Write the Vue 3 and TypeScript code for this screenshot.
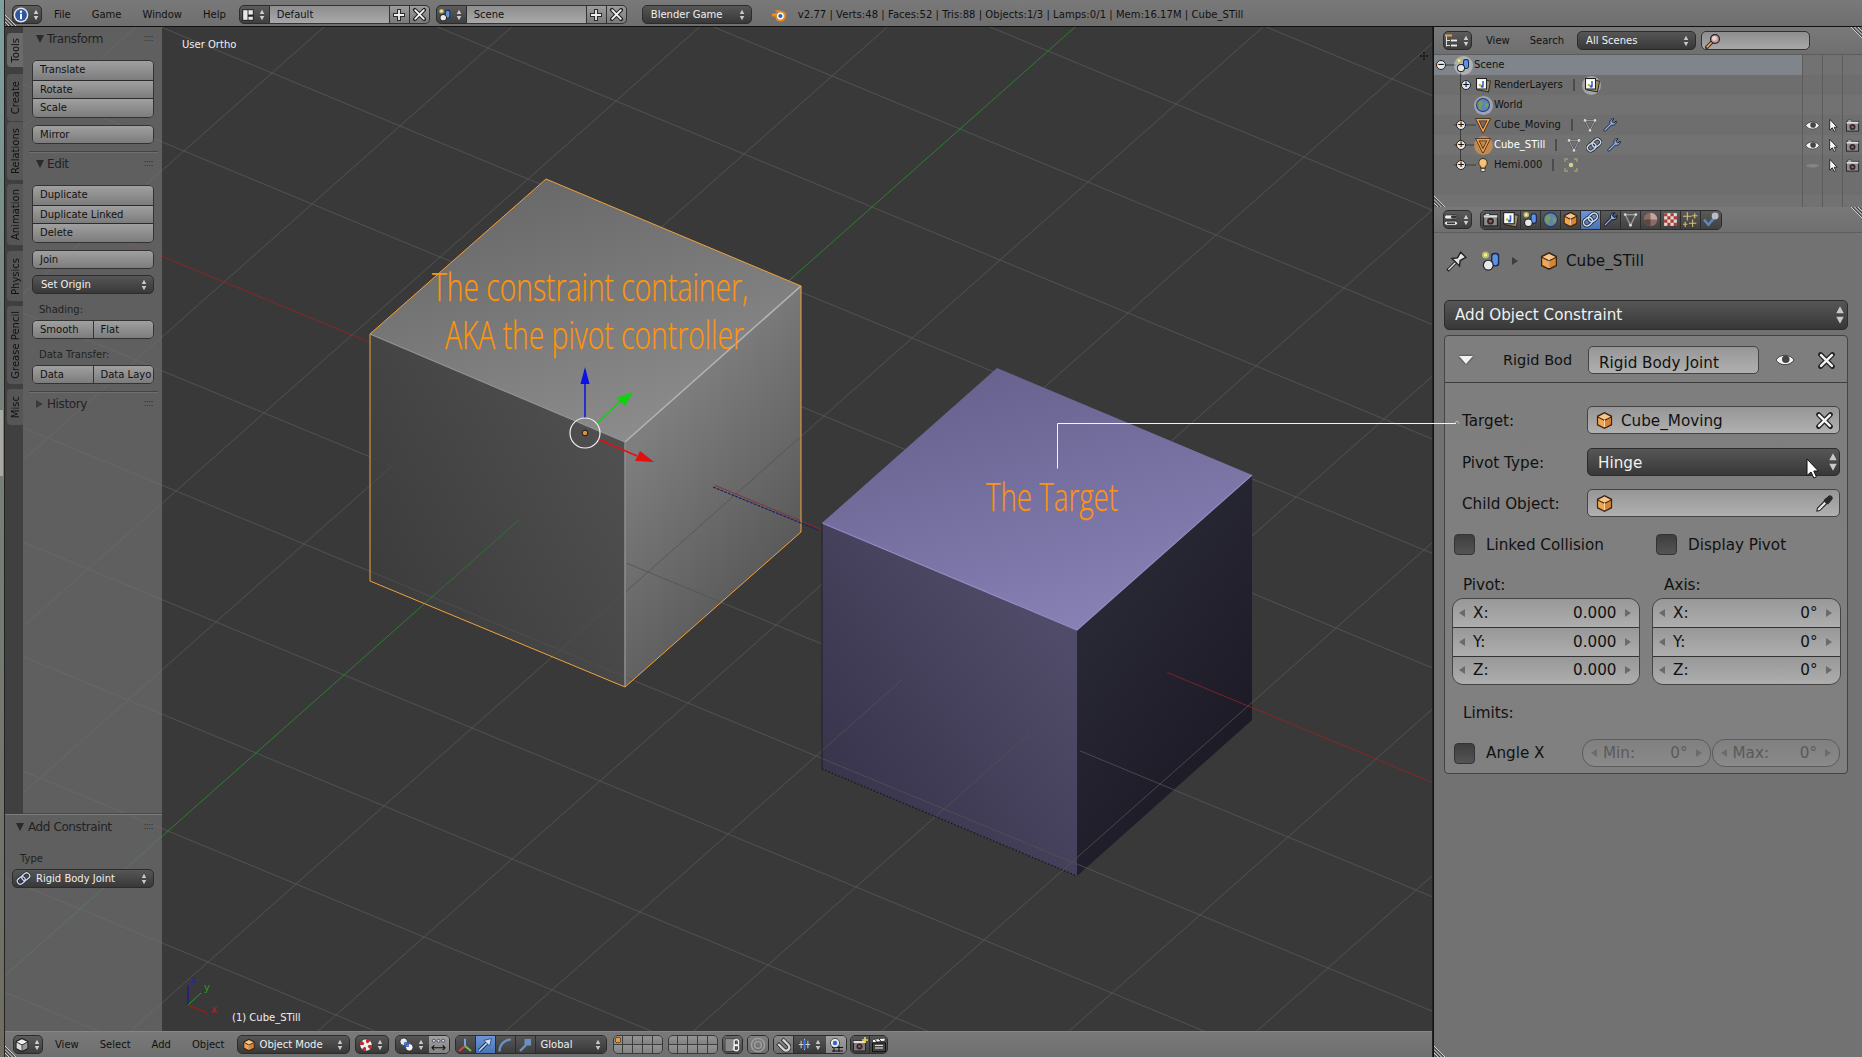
<script setup lang="ts">
import { h } from "vue";
import type { FunctionalComponent } from "vue";

const Ic: FunctionalComponent<{ n: string; s?: number }> = (props) =>
  h("svg", { class: "ic", width: props.s ?? 16, height: props.s ?? 16 }, [h("use", { href: "#" + props.n })]);
Ic.props = ["n", "s"];

// 3D view grid, read off the reference
const origin = { x: 608, y: 441 };
const stepA = { x: 128, y: 53 };
const stepB = { x: -88, y: 78 };

type GridLine = { x1: number; y1: number; x2: number; y2: number; kind: string };

function buildGrid(): GridLine[] {
  const lines: GridLine[] = [];
  for (let n = -14; n <= 14; n++) {
    const cx = origin.x + n * stepB.x;
    const cy = origin.y + n * stepB.y;
    lines.push({ x1: cx - 22 * stepA.x, y1: cy - 22 * stepA.y, x2: cx + 22 * stepA.x, y2: cy + 22 * stepA.y, kind: n === 0 ? "red" : "plain" });
  }
  for (let m = -14; m <= 14; m++) {
    const cx = origin.x + m * stepA.x;
    const cy = origin.y + m * stepA.y;
    lines.push({ x1: cx - 22 * stepB.x, y1: cy - 22 * stepB.y, x2: cx + 22 * stepB.x, y2: cy + 22 * stepB.y, kind: m === 0 ? "green" : "plain" });
  }
  return [...lines.filter((l) => l.kind === "plain"), ...lines.filter((l) => l.kind !== "plain")];
}
const grid = buildGrid();

const tabs = [
  { label: "Tools", cls: "t-tools on" },
  { label: "Create", cls: "t-create" },
  { label: "Relations", cls: "t-rel" },
  { label: "Animation", cls: "t-anim" },
  { label: "Physics", cls: "t-phys" },
  { label: "Grease Pencil", cls: "t-grease" },
  { label: "Misc", cls: "t-misc" },
];

type TreeRow = {
  name: string;
  iconX: number;
  expX?: number;
  exp?: string;
  icon: string;
  halo?: string;
  extras: string[];
  sel?: boolean;
  active?: boolean;
  off?: boolean;
};

const tree: TreeRow[] = [
  { name: "Scene", iconX: 21, expX: 2, exp: "−", icon: "i-scene", halo: "white", extras: [], sel: true },
  { name: "RenderLayers", iconX: 41, expX: 27, exp: "+", icon: "i-render", extras: ["i-render"] },
  { name: "World", iconX: 41, icon: "i-world", halo: "blue", extras: [] },
  { name: "Cube_Moving", iconX: 41, expX: 22, exp: "+", icon: "i-meshobj", extras: ["i-mesh", "i-wrench"] },
  { name: "Cube_STill", iconX: 41, expX: 22, exp: "+", icon: "i-meshobj", halo: "orange", extras: ["i-mesh", "i-link", "i-wrench"], active: true },
  { name: "Hemi.000", iconX: 41, expX: 22, exp: "+", icon: "i-bulb", extras: ["i-lamp"], off: true },
];

const propTabs = ["i-camera", "i-render", "i-scene", "i-world", "i-cube", "i-link", "i-wrench", "i-mesh", "i-material", "i-texture", "i-particle", "i-physics"];
const axes = ["X:", "Y:", "Z:"];
const layerCells = Array.from({ length: 10 }, (_, i) => i);
</script>

<template>
  <div class="app">
    <svg class="defs" width="0" height="0">
      <symbol id="updown" viewBox="0 0 8 16"><path d="M4 1 7 6.6H1zM4 15 1 9.4H7z" fill="currentColor" /></symbol>
      <symbol id="i-info" viewBox="0 0 16 16"><circle cx="8" cy="8" r="7.4" fill="#e4e4e4" /><circle cx="8" cy="8" r="5.9" fill="#2c56a6" /><circle cx="8" cy="4.8" r="1.2" fill="#fff" /><rect x="7" y="6.8" width="2" height="5.4" fill="#fff" /></symbol>
      <symbol id="i-layout" viewBox="0 0 16 16"><rect x="1.5" y="1.5" width="13" height="13" fill="#222" /><rect x="2.5" y="2.5" width="5" height="11" fill="#e8e8e8" /><rect x="8.5" y="2.5" width="5" height="5" fill="#e8e8e8" /><rect x="8.5" y="10" width="5" height="3.5" fill="#e8e8e8" /></symbol>
      <symbol id="i-scene" viewBox="0 0 16 16"><circle cx="4" cy="3.6" r="2.6" fill="#b8b870" /><circle cx="4" cy="3.6" r="1.3" fill="#f0f090" /><rect x="8" y="2" width="6" height="10" rx="2.4" fill="#1a2a50" /><rect x="9" y="3" width="4" height="8" rx="1.8" fill="#5c92e0" /><circle cx="6" cy="11" r="4" fill="#222" /><circle cx="6" cy="11" r="3.1" fill="#e8e8e8" /></symbol>
      <symbol id="i-plus" viewBox="0 0 16 16"><path d="M8 2v12M2 8h12" stroke="#2a2a2a" stroke-width="4" /><path d="M8 3v10M3 8h10" stroke="#f0f0f0" stroke-width="1.8" /></symbol>
      <symbol id="i-x" viewBox="0 0 16 16"><path d="M3 3 13 13M13 3 3 13" stroke="#222" stroke-width="4.2" stroke-linecap="round" /><path d="M3.4 3.4 12.6 12.6M12.6 3.4 3.4 12.6" stroke="#f4f4f4" stroke-width="2" stroke-linecap="round" /></symbol>
      <symbol id="i-blender" viewBox="0 0 16 16"><path d="M1 6.5 7 6 3.5 3 9 3.5C13 3.8 15.5 6.5 15 9.5 14.5 13 11.5 15 8.5 14.5 5.6 14 4 11.5 4.5 9.5L1 9.6z" fill="#ec8a1e" /><circle cx="9.4" cy="9" r="3.4" fill="#fff" /><circle cx="9.4" cy="9" r="2.1" fill="#2a66b0" /></symbol>
      <symbol id="i-outliner" viewBox="0 0 16 16"><rect x="2" y="1.5" width="7" height="2" fill="#f0a040" /><path d="M3.5 3.5v10M3.5 7.5H7M3.5 12.5H7" stroke="#ddd" fill="none" /><rect x="8" y="6.6" width="6" height="1.8" fill="#eee" /><rect x="8" y="11.6" width="6" height="1.8" fill="#eee" /></symbol>
      <symbol id="i-search" viewBox="0 0 16 16"><path d="M7 9 1.8 14.2" stroke="#2a2a2a" stroke-width="3.6" stroke-linecap="round" /><path d="M6.5 9.5 2.2 13.8" stroke="#e6a860" stroke-width="1.7" stroke-linecap="round" /><circle cx="10" cy="6" r="4.4" fill="#c89a96" stroke="#222" stroke-width="1.2" /><circle cx="9.4" cy="5.4" r="2.4" fill="#e8d4d2" /></symbol>
      <symbol id="i-render" viewBox="0 0 16 16"><rect x="3.5" y="3" width="11" height="11" fill="#9c8e6c" stroke="#2e2a22" transform="rotate(10 9 9)" /><rect x="1.5" y="1.5" width="10" height="10.5" fill="#f0f0f0" stroke="#222" /><rect x="3" y="3" width="7" height="7.5" fill="#fff" /><path d="M7.2 4h1.6v5.4a1.6 1.4 0 1 1-1.6-1.4z" fill="#2f66c8" /><circle cx="4.8" cy="8" r="1.2" fill="#d8b020" /></symbol>
      <symbol id="i-world" viewBox="0 0 16 16"><circle cx="8" cy="8" r="7" fill="#2c3c58" /><circle cx="8" cy="8" r="6" fill="#5a84bc" /><path d="M3 5 7 3.5 8.5 7 6 9.5 7 13 4 11.5zM10 5.5 13.6 7 12.4 11.5 10 9.5z" fill="#7c9a5c" /></symbol>
      <symbol id="i-meshobj" viewBox="0 0 16 16"><path d="M2.4 2.8H13.6L8 14z" fill="none" stroke="#3a2410" stroke-width="3" /><path d="M2.4 2.8H13.6L8 14z" fill="none" stroke="#f2a04a" stroke-width="1.6" /></symbol>
      <symbol id="i-mesh" viewBox="0 0 16 16"><path d="M3 3.4H13L8 13.4z" fill="none" stroke="#5a5a5a" stroke-width="2.4" /><path d="M3 3.4H13L8 13.4z" fill="none" stroke="#9e9e9e" stroke-width="1" /><circle cx="3" cy="3.4" r="1.3" fill="#d8d8d8" /><circle cx="13" cy="3.4" r="1.3" fill="#d8d8d8" /><circle cx="8" cy="13.4" r="1.3" fill="#d8d8d8" /></symbol>
      <symbol id="i-wrench" viewBox="0 0 16 16"><path d="M2 12.5 8 6.5C7.2 4 9 1.4 12 1.8L9.8 4.2 11.8 6.2 14.2 4C14.6 7 12 9 9.5 8L3.5 14A1.1 1.1 0 0 1 2 12.5z" fill="#8eb2e8" stroke="#1c2436" stroke-width="1" /></symbol>
      <symbol id="i-link" viewBox="0 0 16 16"><g fill="none" transform="rotate(-40 8 8)"><rect x="0.4" y="4.8" width="9" height="6.4" rx="3.2" stroke="#222" stroke-width="3" /><rect x="6.6" y="4.8" width="9" height="6.4" rx="3.2" stroke="#222" stroke-width="3" /><rect x="0.4" y="4.8" width="9" height="6.4" rx="3.2" stroke="#c4d6f2" stroke-width="1.5" /><rect x="6.6" y="4.8" width="9" height="6.4" rx="3.2" stroke="#c4d6f2" stroke-width="1.5" /></g></symbol>
      <symbol id="i-eye" viewBox="0 0 16 16"><path d="M.8 8C3.6 3 12.4 3 15.2 8 12.4 13 3.6 13 .8 8z" fill="#f4f4f4" stroke="#333" stroke-width=".7" /><circle cx="8.6" cy="7.4" r="3" fill="#444" /></symbol>
      <symbol id="i-eyeoff" viewBox="0 0 16 16"><path d="M1 8C4 6 12 6 15 8 12 11 4 11 1 8z" fill="#848484" /></symbol>
      <symbol id="i-arrow" viewBox="0 0 16 16"><path d="M5 1.4V13L7.8 10.4 9.6 14.4 11.4 13.4 9.8 9.8H13z" fill="#fafafa" stroke="#222" /></symbol>
      <symbol id="i-camera" viewBox="0 0 16 16"><rect x="1.5" y="3.6" width="13" height="10.4" fill="#8c8c8c" stroke="#222" /><rect x="3" y="2.2" width="4" height="2" fill="#ddd" stroke="#222" stroke-width=".6" /><rect x="1.6" y="4" width="12.8" height="2" fill="#ddd" /><circle cx="8" cy="9.6" r="3.2" fill="#2c2c2c" /><circle cx="8" cy="9.6" r="1.4" fill="#b85050" /></symbol>
      <symbol id="i-bulb" viewBox="0 0 16 16"><path d="M8 1.4A4.4 4.4 0 0 1 10.4 9.4V11H5.6V9.4A4.4 4.4 0 0 1 8 1.4z" fill="#f6c27a" stroke="#3a2a16" /><rect x="6" y="11.4" width="4" height="3" fill="#e8e0c8" stroke="#3a2a16" stroke-width=".7" /></symbol>
      <symbol id="i-lamp" viewBox="0 0 16 16"><path d="M2 5V2H5M11 2H14V5M14 11V14H11M5 14H2V11" fill="none" stroke="#a09c78" stroke-width="1.4" /><path d="M4 4 12 12M12 4 4 12" stroke="#7c7a60" /><circle cx="8" cy="8" r="2.2" fill="#d4cf98" /></symbol>
      <symbol id="i-cube" viewBox="0 0 16 16"><path d="M8 .8 14.4 4V12L8 15.2 1.6 12V4z" fill="#3a2410" /><path d="M8 2.2 13.2 4.8 8 7.4 2.8 4.8z" fill="#f7c48c" /><path d="M2.6 5.6 7.6 8.2V13.8L2.6 11.2z" fill="#f3a54c" /><path d="M13.4 5.6 8.4 8.2V13.8L13.4 11.2z" fill="#d98430" /><path d="M8 7.6V13.6" stroke="#ffe4c4" stroke-width=".8" /></symbol>
      <symbol id="i-cubegrey" viewBox="0 0 16 16"><path d="M8 .8 14.4 4V12L8 15.2 1.6 12V4z" fill="#222" /><path d="M8 2.2 13.2 4.8 8 7.4 2.8 4.8z" fill="#eee" /><path d="M2.6 5.6 7.6 8.2V13.8L2.6 11.2z" fill="#ddd" /><path d="M13.4 5.6 8.4 8.2V13.8L13.4 11.2z" fill="#999" /></symbol>
      <symbol id="i-pin" viewBox="0 0 16 16"><path d="M1 15 6.5 9.5" stroke="#222" stroke-width="2.2" /><path d="M1.6 14.4 6.5 9.5" stroke="#ddd" /><path d="M4.2 6.6 8 6.2 10.2 2.2 13.8 5.8 9.8 8 9.4 11.8z" fill="#e8e8e8" stroke="#222" /></symbol>
      <symbol id="i-dropper" viewBox="0 0 16 16"><path d="M1.6 14.4 2 12 8 6 10 8 4 14z" fill="#e8e8e8" stroke="#222" stroke-width=".9" /><path d="M7.2 5 11 1.8A1.9 1.9 0 0 1 14.2 5L11 8.8z" fill="#2a2a2a" /></symbol>
      <symbol id="i-props" viewBox="0 0 16 16"><rect x="1.5" y="3" width="13" height="4" rx="2" fill="#eee" stroke="#222" stroke-width=".7" /><rect x="8" y="3.6" width="6" height="2.8" rx="1.4" fill="#333" /><rect x="1.5" y="9.2" width="13" height="4" rx="2" fill="#eee" stroke="#222" stroke-width=".7" /><path d="M4 11.2h8" stroke="#333" stroke-width="1.6" /></symbol>
      <symbol id="i-material" viewBox="0 0 16 16"><circle cx="8" cy="8" r="6.4" fill="#8e6a64" /><path d="M8 8V1.6A6.4 6.4 0 0 1 14.4 8z" fill="#c0a8a0" /><path d="M8 8H1.6A6.4 6.4 0 0 0 8 14.4z" fill="#5a4844" /></symbol>
      <symbol id="i-texture" viewBox="0 0 16 16"><rect x="2" y="2" width="12" height="12" fill="#e4d8d4" /><path d="M2 2h3v3H2zM8 2h3v3H8zM5 5h3v3H5zM11 5h3v3h-3zM2 8h3v3H2zM8 8h3v3H8zM5 11h3v3H5zM11 11h3v3h-3z" fill="#a83c30" /></symbol>
      <symbol id="i-particle" viewBox="0 0 16 16"><path d="M5 1v8M1 5h8M12 2v5M9.5 4.5h5M10 8v7M6.5 11.5h7M3 10v5M1 12.5h4" stroke="#d8c070" stroke-width="1" fill="none" /></symbol>
      <symbol id="i-physics" viewBox="0 0 16 16"><path d="M1 8 5 13 11 6" stroke="#5c86c0" stroke-width="2.4" fill="none" /><circle cx="11.4" cy="4.6" r="3.2" fill="#b8bcc4" /></symbol>
      <symbol id="i-ring" viewBox="0 0 16 16"><circle cx="8" cy="8" r="7" fill="#f0f0f0" stroke="#222" stroke-width=".7" /><path d="M8 1A7 7 0 0 1 12.9 3L10 6.2A3 3 0 0 0 8 5.2zM15 8A7 7 0 0 1 13 12.9L9.8 10A3 3 0 0 0 10.8 8zM8 15A7 7 0 0 1 3 13L6.2 10A3 3 0 0 0 8 10.8zM1 8A7 7 0 0 1 3 3L6.2 6A3 3 0 0 0 5.2 8z" fill="#c02c2c" /><circle cx="8" cy="8" r="2.2" fill="#eee" /></symbol>
      <symbol id="i-pivot" viewBox="0 0 16 16"><circle cx="5" cy="5" r="4" fill="#e8e8e8" stroke="#222" stroke-width=".8" /><circle cx="11" cy="11" r="4" fill="#f4f4f4" stroke="#222" stroke-width=".8" /><rect x="6.2" y="6.2" width="3.6" height="3.6" fill="none" stroke="#2a60c8" stroke-width="1.4" /></symbol>
      <symbol id="i-activeonly" viewBox="0 0 16 16"><path d="M1 11.5h14M3.5 9 1 11.5 3.5 14M12.5 9 15 11.5 12.5 14" stroke="#111" fill="none" stroke-width="1.1" /><circle cx="3" cy="4" r="1.6" fill="#dde" stroke="#224" stroke-width=".7" /><circle cx="8" cy="4" r="1.6" fill="#dde" stroke="#224" stroke-width=".7" /><circle cx="13" cy="4" r="1.6" fill="#dde" stroke="#224" stroke-width=".7" /></symbol>
      <symbol id="i-manip" viewBox="0 0 16 16"><path d="M8 9V1.8" stroke="#7aa0e0" stroke-width="2" /><path d="M8 9 2 14" stroke="#e04040" stroke-width="2" /><path d="M8 9 14 14" stroke="#70c050" stroke-width="2" /></symbol>
      <symbol id="i-move" viewBox="0 0 16 16"><path d="M2.2 13.8 10 6" stroke="#1c3050" stroke-width="3.4" /><path d="M2.2 13.8 10 6" stroke="#cfe0f8" stroke-width="1.6" /><path d="M14.4 1.6 12.6 9 7 3.4z" fill="#cfe0f8" stroke="#1c3050" stroke-width=".7" /></symbol>
      <symbol id="i-rot" viewBox="0 0 16 16"><path d="M2.5 14.5C2.5 7.5 7.5 2.5 14 2.5" stroke="#6e90c0" stroke-width="2.2" fill="none" /></symbol>
      <symbol id="i-scale" viewBox="0 0 16 16"><path d="M3 14 9 8" stroke="#6e90c0" stroke-width="2.4" /><rect x="7.5" y="2" width="6.5" height="6.5" fill="#6e90c0" /></symbol>
      <symbol id="i-lock" viewBox="0 0 16 16"><rect x="1.5" y="2" width="10" height="12" fill="#c4c4c4" stroke="#222" stroke-width=".7" /><path d="M1.5 2h10L8 14H1.5z" fill="#888" /><rect x="10" y="2.6" width="4.6" height="6" rx="2.2" fill="none" stroke="#eee" stroke-width="1.2" /><rect x="10" y="7.6" width="4.6" height="6" rx="2.2" fill="none" stroke="#eee" stroke-width="1.2" /></symbol>
      <symbol id="i-prop" viewBox="0 0 16 16"><circle cx="8" cy="8" r="6.6" fill="none" stroke="#a0a0a0" stroke-width="1.4" /><circle cx="8" cy="8" r="3.4" fill="none" stroke="#a0a0a0" stroke-width="1.4" /></symbol>
      <symbol id="i-magnet" viewBox="0 0 16 16"><path d="M2.6 6.4 8.8 12.6A3.2 3.2 0 0 0 13.4 8L7.2 1.8" fill="none" stroke="#2a2a2a" stroke-width="4" /><path d="M3.2 7 8.8 12.6A3.2 3.2 0 0 0 13.4 8L7.8 2.4" fill="none" stroke="#d4d4d4" stroke-width="2.4" /></symbol>
      <symbol id="i-snapinc" viewBox="0 0 16 16"><path d="M8 2v12M4.4 4v8M11.6 4v8M2 8h12" stroke="#d8d8d8" fill="none" /><rect x="6.8" y="3" width="2.4" height="10" fill="#3a74d8" /></symbol>
      <symbol id="i-snapgrid" viewBox="0 0 16 16"><path d="M6 9v6M11 9v6M4 10.5h11M4 14h11" stroke="#111" /><circle cx="7" cy="6" r="4.6" fill="#e8e8e8" stroke="#222" stroke-width=".7" /><circle cx="7" cy="6" r="2.2" fill="#2f6ad0" /></symbol>
      <symbol id="i-still" viewBox="0 0 16 16"><rect x="1.5" y="4" width="12" height="10" fill="#7a7a7a" stroke="#222" /><rect x="1.5" y="4" width="12" height="2" fill="#ddd" /><circle cx="7.5" cy="9.4" r="3" fill="#2a2a2a" /><circle cx="7.5" cy="9.4" r="1.4" fill="#b84848" /><path d="M13 0v6M10 3h6" stroke="#f0d050" stroke-width="1.6" /></symbol>
      <symbol id="i-anim" viewBox="0 0 16 16"><rect x="1.5" y="6" width="13" height="8.6" fill="#444" stroke="#111" /><path d="M1.5 2.6 14 1v3L1.5 5.6z" fill="#fff" stroke="#111" stroke-width=".6" /><path d="M4 2.6 6 4.8M8 2 10 4.4" stroke="#111" /><path d="M4 8.4h8M4 11h8" stroke="#eee" /></symbol>
      <symbol id="corner" viewBox="0 0 12 12"><path d="M0 1 11 12M0 4.5 7.5 12M0 8 4 12" stroke="#cfcfcf" fill="none" /><path d="M0 2.4 9.6 12M0 5.9 6.1 12M0 9.4 2.6 12" stroke="#3a3a3a" fill="none" /></symbol>
    </svg>

    <div class="strip"><span class="strip-box"></span></div>

    <div class="main">
      <header class="bar topbar">
        <svg class="corner corner-tl"><use href="#corner" /></svg>
        <div class="dark-btn w-ed"><Ic n="i-info" /><Ic n="updown" :s="12" class="ud" /></div>
        <nav class="menus"><span>File</span><span>Game</span><span>Window</span><span>Help</span></nav>
        <div class="idblock first">
          <div class="dark-btn flush w-idicon"><Ic n="i-layout" :s="14" /><Ic n="updown" :s="12" class="ud" /></div>
          <div class="idfield">Default</div>
          <div class="idtool"><Ic n="i-plus" :s="16" /></div>
          <div class="idtool last"><Ic n="i-x" :s="15" /></div>
        </div>
        <div class="idblock second">
          <div class="dark-btn flush w-idicon"><Ic n="i-scene" :s="14" /><Ic n="updown" :s="12" class="ud" /></div>
          <div class="idfield">Scene</div>
          <div class="idtool"><Ic n="i-plus" :s="16" /></div>
          <div class="idtool last"><Ic n="i-x" :s="15" /></div>
        </div>
        <div class="select engine"><span>Blender Game</span><Ic n="updown" :s="12" /></div>
        <Ic n="i-blender" class="logo" />
        <span class="stats">v2.77 | Verts:48 | Faces:52 | Tris:88 | Objects:1/3 | Lamps:0/1 | Mem:16.17M | Cube_STill</span>
      </header>

      <div class="body">
        <div class="left">
          <div class="viewport">
            <svg class="scene" width="1432" height="1057" viewBox="0 0 1432 1057">
              <defs>
                <linearGradient id="g1top" gradientUnits="userSpaceOnUse" x1="546" y1="179" x2="625" y2="442"><stop offset="0" stop-color="#696969" /><stop offset="1" stop-color="#8c8c8c" /></linearGradient>
                <linearGradient id="g1left" gradientUnits="userSpaceOnUse" x1="625" y1="442" x2="370" y2="581"><stop offset="0" stop-color="#505050" /><stop offset="1" stop-color="#3c3c3c" /></linearGradient>
                <linearGradient id="g1right" gradientUnits="userSpaceOnUse" x1="640" y1="440" x2="790" y2="560"><stop offset="0" stop-color="#7e7e7e" /><stop offset="1" stop-color="#585858" /></linearGradient>
                <linearGradient id="g2top" gradientUnits="userSpaceOnUse" x1="997" y1="368" x2="1077" y2="630"><stop offset="0" stop-color="#67628e" /><stop offset="1" stop-color="#8781b5" /></linearGradient>
                <linearGradient id="g2left" gradientUnits="userSpaceOnUse" x1="1060" y1="640" x2="840" y2="800"><stop offset="0" stop-color="#504b68" /><stop offset="1" stop-color="#38344c" /></linearGradient>
                <linearGradient id="g2right" gradientUnits="userSpaceOnUse" x1="1085" y1="640" x2="1252" y2="760"><stop offset="0" stop-color="#282734" /><stop offset="1" stop-color="#1a1924" /></linearGradient>
                <clipPath id="below1"><path d="M370 457 625 565 801 409V532L625 687 370 581z" /></clipPath>
                <clipPath id="below2"><path d="M822 646 1077 753 1252 597V720L1077 876 822 769z" /></clipPath>
                <g id="gridlines">
                  <line v-for="(l, i) in grid" :key="i" :x1="l.x1" :y1="l.y1" :x2="l.x2" :y2="l.y2" :class="'gl-' + l.kind" />
                </g>
              </defs>

              <rect width="1432" height="1057" fill="#393939" />
              <use href="#gridlines" />

              <path d="M546 179 801 286 625 442 370 334z" fill="url(#g1top)" />
              <path d="M370 334 625 442V687L370 581z" fill="url(#g1left)" />
              <path d="M625 442 801 286V532L625 687z" fill="url(#g1right)" />
              <path d="M997 368 1252 475 1077 630 822 523z" fill="url(#g2top)" />
              <path d="M822 523 1077 630V876L822 769z" fill="url(#g2left)" />
              <path d="M1077 630 1252 475V720L1077 876z" fill="url(#g2right)" />

              <g class="overlay1" clip-path="url(#below1)"><use href="#gridlines" /></g>
              <g class="overlay2" clip-path="url(#below2)"><use href="#gridlines" /></g>

              <path d="M370 334 625 442" stroke="#959595" stroke-width="1.2" fill="none" />
              <path d="M625 442 801 286" stroke="#b4b4b4" stroke-width="1.6" fill="none" />
              <path d="M625 442V687" stroke="#8c8c8c" stroke-width="1.6" fill="none" />
              <path d="M546 179 801 286V532L625 687 370 581V334z" fill="none" stroke="#f2a23a" stroke-width="1" />
              <path d="M713 487 818 530" stroke="#20206a" stroke-width="1.2" stroke-dasharray="3 1" />

              <path d="M822 523 1077 630 1252 475" stroke="#938cc4" stroke-width="1.2" fill="none" />
              <path d="M822 523V769" stroke="#222" />
              <path d="M822 769 1077 876" stroke="#1a1a1a" stroke-width="1.4" stroke-dasharray="1.5 2" fill="none" />

              <path d="M585 418V384" stroke="#0a10e0" stroke-width="1.5" />
              <path d="M585 367 589.5 384H580.5z" fill="#0a10e8" />
              <path d="M596 424 622 400" stroke="#10d010" stroke-width="1.5" />
              <path d="M633 392 625 406 616 398z" fill="#10d010" />
              <path d="M598 439 637 456" stroke="#e01010" stroke-width="1.5" />
              <path d="M654 462 640 451 635 461z" fill="#e01010" />
              <circle cx="585" cy="433" r="15" fill="none" stroke="#f0f0f0" stroke-width="1.2" />
              <circle cx="585" cy="433" r="2.8" fill="#d8943c" stroke="#111" stroke-width=".9" />

              <g class="callout">
                <text x="432" y="301" textLength="316" lengthAdjust="spacingAndGlyphs">The constraint container,</text>
                <text x="445" y="349" textLength="299" lengthAdjust="spacingAndGlyphs">AKA the pivot controller</text>
                <text x="986" y="511" textLength="132" lengthAdjust="spacingAndGlyphs">The Target</text>
              </g>

              <path d="M188 1005V985" stroke="#1010c0" /><path d="M188 1005 201 993" stroke="#10b010" /><path d="M188 1005 207 1013" stroke="#c01010" />
              <text class="ax" x="190" y="983" fill="#2020c0">z</text>
              <text class="ax" x="204" y="991" fill="#20a020">y</text>
              <text class="ax" x="211" y="1013" fill="#c02020">x</text>
              <text class="vtext" x="182" y="48">User Ortho</text>
              <text class="vtext" x="232" y="1021">(1) Cube_STill</text>
              <path d="M1424 52v8M1420 56h8" stroke="#111" stroke-width="1.4" stroke-dasharray="2 1" />
            </svg>

            <aside class="shelf">
              <div class="shelf-top">
                <div class="tabs">
                  <div v-for="t in tabs" :key="t.label" class="tab" :class="t.cls"><span>{{ t.label }}</span></div>
                </div>
                <div class="shelf-panel">
                  <div class="phead"><i class="tri"></i>Transform<b class="grip">::::</b></div>
                  <div class="group g1">
                    <div class="btn">Translate</div><div class="btn">Rotate</div><div class="btn">Scale</div>
                  </div>
                  <div class="group g2"><div class="btn">Mirror</div></div>
                  <div class="phead sep"><i class="tri"></i>Edit<b class="grip">::::</b></div>
                  <div class="group g1b">
                    <div class="btn">Duplicate</div><div class="btn">Duplicate Linked</div><div class="btn">Delete</div>
                  </div>
                  <div class="group g2"><div class="btn">Join</div></div>
                  <div class="select origin"><span>Set Origin</span><Ic n="updown" :s="12" /></div>
                  <div class="slabel">Shading:</div>
                  <div class="group row"><div class="btn half">Smooth</div><div class="btn half">Flat</div></div>
                  <div class="slabel">Data Transfer:</div>
                  <div class="group row"><div class="btn half">Data</div><div class="btn half">Data Layo</div></div>
                  <div class="phead sep hist"><i class="tri side"></i>History<b class="grip">::::</b></div>
                </div>
              </div>
              <div class="shelf-bottom">
                <div class="phead ac"><i class="tri"></i>Add Constraint<b class="grip">::::</b></div>
                <div class="slabel type">Type</div>
                <div class="select rigid"><Ic n="i-link" :s="15" /><span>Rigid Body Joint</span><Ic n="updown" :s="12" /></div>
              </div>
            </aside>
          </div>

          <footer class="bar bottombar">
            <svg class="corner corner-bl"><use href="#corner" /></svg>
            <div class="dark-btn w-ed"><Ic n="i-cubegrey" /><Ic n="updown" :s="12" class="ud" /></div>
            <nav class="menus"><span>View</span><span>Select</span><span>Add</span><span>Object</span></nav>
            <div class="select mode"><Ic n="i-cube" :s="14" /><span>Object Mode</span><Ic n="updown" :s="12" /></div>
            <div class="select shade"><Ic n="i-ring" :s="14" /><Ic n="updown" :s="12" /></div>
            <div class="cluster pivot">
              <div class="select plain"><Ic n="i-pivot" :s="15" /><Ic n="updown" :s="12" /></div>
              <div class="cell light"><Ic n="i-activeonly" :s="15" /></div>
            </div>
            <div class="cluster manip">
              <div class="cell"><Ic n="i-manip" :s="16" /></div>
              <div class="cell blue"><Ic n="i-move" :s="16" /></div>
              <div class="cell"><Ic n="i-rot" :s="16" /></div>
              <div class="cell"><Ic n="i-scale" :s="16" /></div>
              <div class="select plain global"><span>Global</span><Ic n="updown" :s="12" /></div>
            </div>
            <div class="layers first-layers">
              <i v-for="c in layerCells" :key="c" :class="{ used: c === 0 }"></i>
            </div>
            <div class="layers">
              <i v-for="c in layerCells" :key="c"></i>
            </div>
            <div class="cluster lock"><div class="cell mid"><Ic n="i-lock" :s="16" /></div></div>
            <div class="cluster prop"><div class="cell faded"><Ic n="i-prop" :s="16" /></div></div>
            <div class="cluster snap">
              <div class="cell midl"><Ic n="i-magnet" :s="16" /></div>
              <div class="select plain snapel"><Ic n="i-snapinc" :s="15" /><Ic n="updown" :s="12" /></div>
              <div class="cell light"><Ic n="i-snapgrid" :s="16" /></div>
            </div>
            <div class="cluster render">
              <div class="cell"><Ic n="i-still" :s="16" /></div>
              <div class="cell"><Ic n="i-anim" :s="16" /></div>
            </div>
          </footer>
        </div>

        <div class="right">
          <section class="outliner">
            <div class="bar ohead">
              <svg class="corner corner-tr"><use href="#corner" /></svg>
              <div class="dark-btn w-ol"><Ic n="i-outliner" /><Ic n="updown" :s="12" class="ud" /></div>
              <nav class="menus ol"><span>View</span><span>Search</span></nav>
              <div class="select scenes"><span>All Scenes</span><Ic n="updown" :s="12" /></div>
              <div class="searchbox"><Ic n="i-search" :s="16" /></div>
            </div>
            <div class="rows">
              <svg class="wires" width="60" height="120">
                <path d="M26.5 10V110M10 10H22M26.5 30H33M26.5 70H20M26.5 90H20M26.5 110H20M26 70H42M26 90H42M26 110H42" stroke="#3a3a3a" fill="none" />
              </svg>
              <div v-for="(r, i) in tree" :key="r.name" class="row" :class="{ sel: r.sel, alt: i % 2 === 1 }">
                <div class="rowmain" :style="{ paddingLeft: r.iconX + 'px' }">
                  <span v-if="r.exp" class="exp" :style="{ left: r.expX + 'px' }">{{ r.exp }}</span>
                  <span class="rowic" :class="r.halo ? 'halo-' + r.halo : ''"><Ic :n="r.icon" :s="16" /></span>
                  <span class="rowname" :class="{ act: r.active }">{{ r.name }}</span>
                  <i v-if="r.extras.length" class="rsep"></i>
                  <span v-for="(x, k) in r.extras" :key="k" class="rowex" :class="{ 'halo-white': x === 'i-render' }"><Ic :n="x" :s="16" /></span>
                </div>
                <div class="rc"><Ic v-if="i > 2" :n="r.off ? 'i-eyeoff' : 'i-eye'" :s="15" /></div>
                <div class="rc"><Ic v-if="i > 2" n="i-arrow" :s="15" /></div>
                <div class="rc"><Ic v-if="i > 2" n="i-camera" :s="15" /></div>
              </div>
              <div class="row filler alt"><div class="rowmain"></div><div class="rc"></div><div class="rc"></div><div class="rc"></div></div>
              <div class="row filler short"><div class="rowmain"></div><div class="rc"></div><div class="rc"></div><div class="rc"></div></div>
              <svg class="corner corner-bl2"><use href="#corner" /></svg>
            </div>
          </section>

          <section class="props">
            <div class="bar phd">
              <svg class="corner corner-tr"><use href="#corner" /></svg>
              <div class="dark-btn w-pr"><Ic n="i-props" /><Ic n="updown" :s="12" class="ud" /></div>
              <div class="ptabs">
                <div v-for="t in propTabs" :key="t" class="ptab" :class="{ active: t === 'i-link' }"><Ic :n="t" :s="17" /></div>
              </div>
            </div>
            <div class="pbody">
              <div class="crumbs">
                <Ic n="i-pin" :s="23" class="pin" />
                <Ic n="i-scene" :s="22" class="scn" />
                <i class="crumb-tri"></i>
                <Ic n="i-cube" :s="20" class="cb" />
                <span class="crumb-name">Cube_STill</span>
              </div>
              <div class="select addc"><span>Add Object Constraint</span><Ic n="updown" :s="20" class="bigud" /></div>

              <div class="box">
                <div class="boxhead">
                  <i class="tri-down"></i>
                  <span class="cname">Rigid Bod</span>
                  <div class="tfield namef"><span>Rigid Body Joint</span></div>
                  <Ic n="i-eye" :s="20" class="boxeye" />
                  <Ic n="i-x" :s="19" class="boxx" />
                </div>
                <div class="boxbody">
                  <div class="frow">
                    <label>Target:</label>
                    <div class="tfield w"><Ic n="i-cube" :s="19" /><span>Cube_Moving</span><Ic n="i-x" :s="19" class="endic" /></div>
                  </div>
                  <div class="frow">
                    <label>Pivot Type:</label>
                    <div class="select w hinge"><span>Hinge</span><Ic n="updown" :s="20" class="bigud" /></div>
                  </div>
                  <div class="frow">
                    <label>Child Object:</label>
                    <div class="tfield w"><Ic n="i-cube" :s="19" /><span></span><Ic n="i-dropper" :s="19" class="endic" /></div>
                  </div>
                  <div class="checks">
                    <div class="check"><i></i>Linked Collision</div>
                    <div class="check second-check"><i></i>Display Pivot</div>
                  </div>
                  <div class="cols heads"><span>Pivot:</span><span>Axis:</span></div>
                  <div class="cols">
                    <div class="numgroup">
                      <div v-for="a in axes" :key="a" class="num"><i class="al"></i><span>{{ a }}</span><b>0.000</b><i class="ar"></i></div>
                    </div>
                    <div class="numgroup">
                      <div v-for="a in axes" :key="a" class="num"><i class="al"></i><span>{{ a }}</span><b>0°</b><i class="ar"></i></div>
                    </div>
                  </div>
                  <div class="limits">Limits:</div>
                  <div class="limitrow">
                    <div class="check"><i></i>Angle X</div>
                    <div class="lims">
                      <div class="lim"><i class="al"></i><span>Min:</span><b>0°</b><i class="ar"></i></div>
                      <div class="lim"><i class="al"></i><span>Max:</span><b>0°</b><i class="ar"></i></div>
                    </div>
                  </div>
                </div>
              </div>
              <svg class="corner corner-bl3"><use href="#corner" /></svg>
            </div>
          </section>
        </div>
      </div>
    </div>

    <!-- callout leader runs from the view into the properties editor -->
    <svg class="leader" width="1862" height="1057">
      <path d="M1057.5 468.5V423.5H1456" stroke="#f4f4f0" stroke-width="1" fill="none" />
      <path d="M1455 423.5c1-3 3-3 4 0" stroke="#d8d4b0" fill="none" />
      <path d="M1807 459V475.5L1811 472 1813.8 478 1816.4 476.8 1813.8 471H1818.4z" fill="#fff" stroke="#111" />
    </svg>
  </div>
</template>

<style>
html, body { margin: 0; background: #333; overflow: hidden; }
</style>

<style scoped>
.app {
  position: relative;
  display: flex;
  width: 1862px;
  height: 1057px;
  overflow: hidden;
  font-family: "DejaVu Sans", sans-serif;
  font-size: 10px;
  color: #111;
  background: #1c1c1c;
}
.defs { position: absolute; }
.ic { display: block; flex: none; }
.strip {
  position: relative;
  width: 4px;
  flex: none;
  background: linear-gradient(#7ea2a0, #79857f 30%, #6f6c60);
}
.strip-box { position: absolute; left: 0; top: 410px; width: 3px; height: 66px; background: #a8aaa4; }
.main { flex: 1; display: flex; flex-direction: column; min-width: 0; padding-left: 1px; background: #222; }

.bar {
  position: relative;
  display: flex;
  align-items: center;
  background: linear-gradient(#797979, #6f6f6f);
  flex: none;
}
.topbar { height: 26px; box-sizing: content-box; border-bottom: 1px solid #111; padding-left: 7px; padding-top: 0; }
.topbar > * { position: relative; top: 1.5px; }
.topbar > .corner { position: absolute; top: auto; }
.bottombar { height: 26px; padding-left: 8px; border-top: 1px solid #868686; box-sizing: border-box; }
.corner { position: absolute; width: 12px; height: 12px; }
.corner-tl { left: 0; bottom: 0; }
.corner-bl { left: 0; bottom: 0; }
.corner-tr { right: 0; top: 0; transform: scaleX(-1) scaleY(-1); }
.corner-bl2 { left: 0; bottom: 0; }
.corner-bl3 { left: 0; bottom: 0; }

.dark-btn {
  display: flex;
  align-items: center;
  justify-content: center;
  gap: 1px;
  height: 19px;
  box-sizing: border-box;
  border: 1px solid #2c2c2c;
  border-radius: 5px;
  background: linear-gradient(#5c5c5c, #3e3e3e);
  color: #d2d2d2;
}
.dark-btn.flush { border-radius: 5px 0 0 5px; }
.ud { color: #cfcfcf; }
.w-ed { width: 30px; }
.w-idicon { width: 31px; }
.w-ol { width: 29px; }
.w-pr { width: 29px; }

.menus { display: flex; gap: 21px; margin-left: 12px; color: #111; }
.menus.ol { margin-left: 14px; gap: 20px; }
.idblock { display: flex; height: 19px; }
.idblock.first { margin-left: 13px; }
.idblock.second { margin-left: 6px; }
.idfield {
  width: 120px;
  box-sizing: border-box;
  padding-left: 7px;
  line-height: 17px;
  border: 1px solid #333;
  border-left: 0;
  background: linear-gradient(#8e8e8e, #a8a8a8);
}
.idtool {
  width: 20px;
  box-sizing: border-box;
  display: flex;
  align-items: center;
  justify-content: center;
  border: 1px solid #333;
  border-left: 0;
  background: linear-gradient(#9c9c9c, #7a7a7a);
}
.idtool.last { border-radius: 0 5px 5px 0; }

.select {
  display: flex;
  align-items: center;
  justify-content: space-between;
  box-sizing: border-box;
  height: 19px;
  padding: 0 3px 0 8px;
  border: 1px solid #2c2c2c;
  border-radius: 5px;
  background: linear-gradient(#565656, #383838);
  color: #f0f0f0;
}
.select .ic { color: #c8c8c8; }
.engine { width: 110px; margin-left: 15px; }
.logo { margin-left: 19px; }
.stats { margin-left: 11px; color: #111; white-space: nowrap; letter-spacing: .055px; }

.body { flex: 1; display: flex; min-height: 0; }
.left { width: 1427px; display: flex; flex-direction: column; flex: none; }
.viewport { position: relative; flex: 1; overflow: hidden; background: #393939; }
.scene { position: absolute; left: -5px; top: -27px; }
.gl-plain { stroke: #525252; stroke-width: 1; }
.gl-red { stroke: #8a2626; stroke-width: 1; }
.gl-green { stroke: #2a8030; stroke-width: 1; }
.overlay1 { opacity: 0.75; }
.overlay2 { opacity: 0.85; }
.callout text { font-family: "Open Sans", sans-serif; font-weight: 300; font-size: 38px; fill: #ff9408; stroke: #ff9408; stroke-width: .25px; }
.vtext { font-size: 10px; fill: #f0f0f0; }
.ax { font-size: 10px; }

.shelf {
  position: absolute;
  left: 0;
  top: 0;
  bottom: 0;
  width: 157px;
  display: flex;
  flex-direction: column;
}
.shelf-top { display: flex; flex: none; height: 787px; }
.tabs { position: relative; width: 18px; flex: none; background: #404040; }
.tab {
  position: absolute;
  left: 2px;
  width: 16px;
  background: #565656;
  border-radius: 4px 0 0 4px;
  display: flex;
  align-items: center;
  justify-content: center;
  color: #111;
}
.tab span { writing-mode: vertical-rl; transform: rotate(180deg); white-space: nowrap; }
.tab.on { background: #6a6a6a; }
.t-tools { top: 6px; height: 34px; }
.t-create { top: 47px; height: 47px; }
.t-rel { top: 95px; height: 58px; }
.t-anim { top: 157px; height: 61px; }
.t-phys { top: 224px; height: 50px; }
.t-grease { top: 279px; height: 78px; }
.t-misc { top: 362px; height: 36px; }
.shelf-panel { flex: 1; padding: 0 8px 0 9px; background: rgba(114, 114, 114, 0.68); }
.phead {
  position: relative;
  display: flex;
  align-items: center;
  height: 24px;
  padding-left: 15px;
  font-size: 12px;
  letter-spacing: -0.4px;
  color: #222;
}
.phead.sep { margin: 7px -4px 0 -3px; padding-left: 18px; height: 23px; border-top: 1px solid #444; box-shadow: inset 0 1px 0 #6f6f6f; }
.phead.hist { margin-top: 7px; }
.tri { position: absolute; left: 4px; width: 0; height: 0; border: 4px solid transparent; border-top: 8px solid #2a2a2a; border-bottom: 0; }
.phead.sep .tri { left: 7px; }
.tri.side { border: 4px solid transparent; border-left: 7px solid #3a3a3a; border-right: 0; }
.grip { position: absolute; right: 1px; top: 7px; font-size: 8px; font-weight: 400; letter-spacing: -.4px; color: #2c2c2c; }
.phead.sep .grip { right: 5px; }
.group {
  display: flex;
  flex-direction: column;
  box-sizing: border-box;
  border: 1px solid #333;
  border-radius: 5px;
  overflow: hidden;
}
.group.row { flex-direction: row; height: 19px; }
.g1 { margin-top: 9px; }
.g1b { margin-top: 10px; }
.g2 { margin-top: 7px; }
.btn {
  box-sizing: border-box;
  height: 18.7px;
  line-height: 18.5px;
  padding-left: 7px;
  background: linear-gradient(#a0a0a0, #7c7c7c);
  color: #111;
  white-space: nowrap;
  overflow: hidden;
}
.g2 .btn { height: 17px; line-height: 17px; }
.btn + .btn { border-top: 1px solid #2c2c2c; }
.group.row .btn { flex: 1; height: 17px; line-height: 18px; min-width: 0; }
.group.row .btn + .btn { border-top: 0; border-left: 1px solid #333; padding-left: 7px; }
.select.origin { margin-top: 6px; }
.slabel { margin: 10px 0 4px 7px; line-height: 12px; color: #222; }
.shelf-bottom { flex: 1; padding: 0 8px 0 7px; border-top: 1px solid #7c7c7c; background: rgba(114, 114, 114, 0.68); box-shadow: 0 -1px 0 #4a4a4a; }
.phead.ac { padding-left: 14px; margin-left: 2px; }
.phead.ac .tri { left: 2px; }
.slabel.type { margin: 14px 0 4px 8px; }
.rigid { padding-left: 3px; justify-content: flex-start; gap: 5px; }
.rigid .ic:last-child { margin-left: auto; }

.cluster { display: flex; height: 19px; box-sizing: border-box; border: 1px solid #2c2c2c; border-radius: 5px; overflow: hidden; }
.cell {
  width: 20px;
  flex: none;
  display: flex;
  align-items: center;
  justify-content: center;
  background: linear-gradient(#565656, #3e3e3e);
  box-sizing: border-box;
  border-right: 1px solid #2c2c2c;
}
.cell:last-child { border-right: 0; }
.cell.blue { background: linear-gradient(#6b95d8, #4a74b8); }
.cell.light { background: linear-gradient(#a0a0a0, #848484); }
.cell.mid { background: linear-gradient(#666, #4c4c4c); }
.cell.midl { background: linear-gradient(#8a8a8a, #6c6c6c); }
.cell.faded { background: linear-gradient(#808080, #6e6e6e); }
.select.plain { border: 0; border-radius: 0; height: 100%; padding: 0 2px 0 3px; }
.bottombar .select.mode { width: 113px; margin-left: 12px; padding-left: 4px; justify-content: flex-start; gap: 4px; }
.mode .ic:last-child { margin-left: auto; }
.shade { width: 34px; margin-left: 5px; padding: 0 2px 0 3px; }
.pivot { width: 55px; margin-left: 6px; }
.pivot .plain { width: 35px; }
.manip { width: 152px; margin-left: 5px; }
.global { flex: 1; padding-left: 5px !important; border-left: 1px solid #2c2c2c; }
.layers {
  display: grid;
  grid-template-columns: repeat(5, 1fr);
  grid-template-rows: 1fr 1fr;
  width: 50px;
  height: 19px;
  margin-left: 5px;
  box-sizing: border-box;
  border: 1px solid #3a3a3a;
  border-radius: 5px;
  overflow: hidden;
  gap: 1px;
  background: #3e3e3e;
}
.first-layers { margin-left: 6px; }
.layers i { background: linear-gradient(#939393, #828282); }
.layers i.used { background: radial-gradient(circle at 50% 50%, #e89a40 0 2.4px, #5a4020 2.6px 3.2px, #8f8f8f 3.4px); }
.lock { width: 21px; margin-left: 4px; }
.prop { width: 22px; margin-left: 4px; }
.prop .cell { width: 100%; }
.lock .cell { width: 100%; }
.snap { width: 74px; margin-left: 4px; }
.snapel { width: 35px; }
.render { width: 38px; margin-left: 3px; }
.render .cell { width: 19px; }

.right { flex: 1; display: flex; flex-direction: column; min-width: 0; margin-left: 1px; background: #111; padding-left: 1px; }
.outliner { height: 179px; flex: none; position: relative; }
.ohead { height: 27px; padding-left: 9px; }
.scenes { width: 119px; margin-left: 13px; }
.searchbox {
  width: 109px;
  height: 19px;
  margin-left: 5px;
  box-sizing: border-box;
  border: 1px solid #333;
  border-radius: 5px;
  background: linear-gradient(#8e8e8e, #a8a8a8);
  display: flex;
  align-items: center;
  padding-left: 3px;
}
.rows { position: relative; border-top: 1px solid #5c5c5c; }
.wires { position: absolute; left: 0; top: 0; pointer-events: none; z-index: 2; }
.row { position: relative; display: flex; height: 20px; background: #727272; }
.row.alt { background: #6e6e6e; }
.row.sel .rowmain { background: #7f858a; }
.row.short { height: 12px; }
.rowmain { flex: 1; position: relative; display: flex; align-items: center; min-width: 0; color: #111; white-space: nowrap; }
.exp {
  position: absolute;
  top: 5px;
  width: 8px;
  height: 8px;
  border: 1px solid #222;
  border-radius: 50%;
  background: #e4e4e4;
  font-size: 9px;
  line-height: 7px;
  text-align: center;
  font-weight: 700;
  color: #111;
  z-index: 3;
}
.rowic, .rowex { position: relative; width: 16px; height: 16px; flex: none; z-index: 3; }
.halo-white::before, .halo-orange::before, .halo-blue::before {
  content: "";
  position: absolute;
  inset: -1.5px;
  border-radius: 50%;
  background: rgba(230, 230, 230, 0.45);
}
.halo-orange::before { background: rgba(232, 150, 70, 0.65); }
.halo-blue::before { background: rgba(190, 205, 240, 0.55); }
.rowic .ic, .rowex .ic { position: relative; }
.rowname { margin-left: 3px; line-height: 20px; }
.rowname.act { color: #fff; }
.rsep { width: 2px; height: 12px; margin: 0 9px 0 10px; background: #4c4c4c; flex: none; }
.rowex + .rowex { margin-left: 4px; }
.rc {
  width: 20px;
  flex: none;
  box-sizing: border-box;
  border-left: 1px solid #5c5c5c;
  display: flex;
  align-items: center;
  justify-content: center;
  z-index: 1;
}

.props { flex: 1; margin-top: 1px; display: flex; flex-direction: column; background: #727272; }
.phd { height: 26px; padding-left: 9px; border-bottom: 1px solid #5e5e5e; box-sizing: border-box; }
.ptabs {
  display: flex;
  margin-left: 8px;
  height: 20px;
  box-sizing: border-box;
  border: 1px solid #2c2c2c;
  border-radius: 5px;
  overflow: hidden;
}
.ptab {
  width: 20px;
  box-sizing: border-box;
  display: flex;
  align-items: center;
  justify-content: center;
  background: linear-gradient(#5a5a5a, #404040);
  border-right: 1px solid #2c2c2c;
}
.ptab:last-child { border-right: 0; }
.ptab.active { background: linear-gradient(#6b95d8, #4a74b8); }
.pbody { position: relative; flex: 1; padding: 0 14px 0 10px; font-size: 15.2px; color: #111; }
.crumbs { display: flex; align-items: center; height: 54px; position: relative; padding-top: 1px; box-sizing: border-box; }
.pin { margin-left: 2px; }
.scn { margin-left: 11px; }
.crumb-tri { width: 0; height: 0; margin-left: 10px; border: 4px solid transparent; border-left: 6px solid #3e3e3e; border-right: 0; }
.cb { margin-left: 21px; }
.crumb-name { margin-left: 7px; }
.select.addc { margin-top: 13px; height: 30px; padding: 0 1px 0 10px; font-size: 15.2px; border-radius: 5px; }
.bigud { margin-right: -4px; }
.box {
  margin-top: 5px;
  height: 439px;
  box-sizing: border-box;
  border: 1px solid #444;
  border-radius: 4px;
  background: linear-gradient(#7e7e7e, #808080);
}
.boxhead { position: relative; display: flex; align-items: center; height: 47px; box-sizing: border-box; border-bottom: 1px solid #3c3c3c; padding-top: 2px; }
.tri-down {
  width: 0;
  height: 0;
  margin-left: 14px;
  border: 7px solid transparent;
  border-top: 8px solid #f2f2f2;
  border-bottom: 0;
  filter: drop-shadow(0 0 1px #222);
}
.cname { margin-left: 30px; width: 85px; white-space: nowrap; font-size: 14.5px; }
.tfield {
  display: flex;
  align-items: center;
  box-sizing: border-box;
  height: 28px;
  border: 1px solid #444;
  border-radius: 5px;
  background: linear-gradient(#969696, #b0b0b0);
  color: #111;
}
.tfield > span, .hinge > span { position: relative; top: 1px; }
.namef { width: 171px; padding-left: 10px; }
.namef > span { top: 3px; }
.boxeye { margin-left: 16px; }
.boxx { margin-left: 22px; }
.boxbody { padding: 23px 7px 0 7px; }
.frow { display: flex; align-items: center; height: 28px; margin-bottom: 13.5px; }
.frow label { width: 135px; padding-left: 10px; padding-top: 2px; box-sizing: border-box; white-space: nowrap; flex: none; }
.w { flex: 1; }
.tfield.w { padding: 0 5px 0 7px; gap: 7px; }
.endic { margin-left: auto; }
.select.w { height: 28px; }
.select.hinge { padding: 0 0 0 10px; }
.checks { display: flex; align-items: center; height: 21px; margin-top: 17px; padding-left: 2px; }
.check { display: flex; align-items: center; gap: 11px; white-space: nowrap; }
.check i {
  width: 21px;
  height: 21px;
  box-sizing: border-box;
  border: 1px solid #333;
  border-radius: 4px;
  background: linear-gradient(#3e3e3e, #545454);
}
.second-check { margin-left: 26px; }
.checks .check:first-child { width: 176px; }
.cols { display: grid; grid-template-columns: 188px 189px; column-gap: 12px; }
.cols.heads { margin-top: 20px; margin-bottom: 3px; height: 20px; line-height: 20px; padding-left: 11px; grid-template-columns: 201px 189px; column-gap: 0; }
.numgroup {
  box-sizing: border-box;
  height: 87px;
  border: 1px solid #444;
  border-radius: 11px;
  overflow: hidden;
}
.num, .lim { display: flex; align-items: center; white-space: nowrap; }
.num {
  height: 28.33px;
  box-sizing: border-box;
  padding: 0 8px 0 6px;
  background: linear-gradient(#989898, #aeaeae);
}
.num + .num { border-top: 1px solid #333; }
.num span { margin-left: 8px; }
.num b, .lim b { margin-left: auto; font-weight: 400; }
.num b { margin-right: 8.5px; }
.al, .ar { width: 0; height: 0; border: 4.5px solid transparent; flex: none; }
.al { border-right: 6px solid #6a6a6a; border-left: 0; }
.ar { border-left: 6px solid #6a6a6a; border-right: 0; }
.limits { margin: 17.5px 0 0 11px; line-height: 20px; }
.limitrow { display: flex; align-items: center; height: 28px; margin-top: 16.5px; padding-left: 2px; }
.limitrow .check { width: 128px; }
.lims { flex: 1; display: flex; gap: 1px; }
.lim {
  flex: 1;
  height: 28px;
  box-sizing: border-box;
  padding: 0 8px;
  border: 1px solid #5c5c5c;
  border-radius: 13px;
  background: linear-gradient(#808080, #8a8a8a);
  color: #5a5a5a;
}
.lim span { margin-left: 6px; }
.lim b { margin-right: 8px; }
.lim .al { border-right-color: #6c6c6c; }
.lim .ar { border-left-color: #6c6c6c; }

.leader { position: absolute; left: 0; top: 0; pointer-events: none; }
</style>
